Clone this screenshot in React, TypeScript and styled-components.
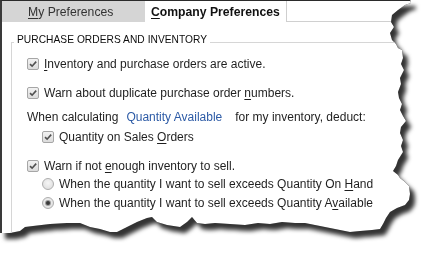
import React from 'react';
import styled, { createGlobalStyle } from 'styled-components';

const GlobalStyle = createGlobalStyle`
  html, body {
    margin: 0;
    padding: 0;
    background: #ffffff;
  }
`;

// torn paper edge, in px of the sheet box
const TORN_EDGE = `polygon(
  0px 0px, 410px 0px, 411px 3px, 405px 5px, 398px 10px, 392px 15px, 391px 22px, 394px 27px,
  390px 33px, 392px 40px, 396px 44px, 398px 48px, 402px 50px, 403px 58px, 401px 64px,
  404px 70px, 400px 78px, 401px 84px, 398px 92px, 399px 98px, 402px 104px, 400px 110px,
  403px 116px, 406px 121px, 401px 127px, 400px 133px, 403px 140px, 401px 146px, 403px 152px,
  398px 160px, 396px 166px, 393px 171px, 398px 175px, 400px 178px, 405px 182px, 409px 186px,
  410px 194px, 409px 200px, 405px 205px, 397px 208px, 390px 212px, 386px 218px, 383px 224px,
  380px 229px, 372px 230px, 360px 231px, 350px 232px, 340px 230px, 330px 228px, 320px 226px,
  305px 223px, 295px 223px, 282px 222px, 270px 224px, 258px 223px, 245px 225px, 230px 224px,
  215px 223px, 205px 224px, 197px 223px, 192px 217px, 187px 222px, 180px 227px, 167px 225px,
  157px 222px, 152px 217px, 147px 218px, 137px 222px, 127px 227px, 117px 232px, 110px 232px,
  100px 229px, 90px 227px, 80px 223px, 67px 223px, 50px 224px, 33px 226px, 25px 227px,
  20px 231px, 10px 233px, 0px 233px
)`;

const Stage = styled.div`
  width: 435px;
  height: 259px;
  overflow: hidden;
  background: #ffffff;
`;

const ShadowWrap = styled.div`
  width: 420px;
  filter: drop-shadow(0 0 0.6px rgba(0, 0, 0, 0.95)) drop-shadow(5px 6px 2px rgba(0, 0, 0, 0.8));
`;

const Sheet = styled.div`
  box-sizing: border-box;
  width: 420px;
  height: 240px;
  background: #ffffff;
  border-top: 1px solid #2b2b2b;
  border-left: 2px solid #3a3a3a;
  clip-path: ${TORN_EDGE};
  font-family: 'Liberation Sans', Arial, sans-serif;
  font-size: 12px;
  color: #1f1f1f;
`;

const Tabs = styled.div`
  display: flex;
  height: 21px;
`;

const Tab = styled.div<{ $width: number; $pad: number; $active?: boolean }>`
  box-sizing: border-box;
  width: ${(p) => p.$width}px;
  padding-left: ${(p) => p.$pad}px;
  display: flex;
  align-items: center;
  font-size: 12.2px;
  background: ${(p) => (p.$active ? '#ffffff' : '#d5d5d5')};
  color: ${(p) => (p.$active ? '#111111' : '#333333')};
  font-weight: ${(p) => (p.$active ? 700 : 400)};
  border-right: ${(p) => (p.$active ? '1px solid #cfcfcf' : 'none')};
`;

const TabFiller = styled.div`
  flex: 1;
  border-bottom: 1px solid #d0d0d0;
`;

const Body = styled.div`
  padding: 13px 0 0 9px;
`;

const Group = styled.fieldset`
  margin: 0;
  padding: 0 0 40px 15px;
  border: none;
  border-top: 1px solid #d6d6d6;
  border-left: 1px solid #d6d6d6;
  min-width: 0;
`;

const GroupTitle = styled.legend`
  margin-left: -13px;
  padding: 0 3px 4px;
  font-size: 10.2px;
  line-height: 10px;
  letter-spacing: 0.05px;
  color: #0c0c0c;
`;

const Row = styled.div<{ $indent?: boolean; $gap: number }>`
  display: flex;
  align-items: center;
  height: 18px;
  margin-top: ${(p) => p.$gap}px;
  padding-left: ${(p) => (p.$indent ? 15 : 0)}px;
  white-space: nowrap;
`;

const Box = styled.span`
  box-sizing: border-box;
  width: 12px;
  height: 12px;
  margin-right: 5px;
  border: 1px solid #a6a6a6;
  border-radius: 2px;
  background: linear-gradient(#f2f2f2, #dcdcdc);
  display: flex;
  align-items: center;
  justify-content: center;
`;

const Radio = styled.span<{ $on?: boolean }>`
  box-sizing: border-box;
  width: 12px;
  height: 12px;
  margin-right: 5px;
  border: 1px solid #adadad;
  border-radius: 50%;
  background: radial-gradient(circle at 50% 40%, #f6f6f6, #d9d9d9);
  display: flex;
  align-items: center;
  justify-content: center;

  &::after {
    content: '';
    display: ${(p) => (p.$on ? 'block' : 'none')};
    width: 4px;
    height: 4px;
    border-radius: 50%;
    background: #3a3a3a;
    box-shadow: 0 0 0 1px #9c9c9c;
  }
`;

const Key = styled.u`
  text-decoration-thickness: 1px;
  text-underline-offset: 2px;
`;

const Prompt = styled.span`
  margin-right: 8px;
`;

const Deduct = styled.span`
  color: #2d5ba6;
  margin-right: 13px;
`;

const Check = () => (
  <Box>
    <svg width="10" height="10" viewBox="0 0 10 10">
      <path d="M2 5.2 L4.1 7.2 L8.2 2.6" fill="none" stroke="#505050" strokeWidth="1.6" />
    </svg>
  </Box>
);

const App: React.FC = () => (
  <>
    <GlobalStyle />
    <Stage>
      <ShadowWrap>
        <Sheet>
          <Tabs>
            <Tab $width={143} $pad={26}>
              <span><Key>M</Key>y Preferences</span>
            </Tab>
            <Tab $width={142} $pad={6} $active>
              <span><Key>C</Key>ompany Preferences</span>
            </Tab>
            <TabFiller />
          </Tabs>
          <Body>
            <Group>
              <GroupTitle>PURCHASE ORDERS AND INVENTORY</GroupTitle>
              <Row $gap={6}>
                <Check />
                <span><Key>I</Key>nventory and purchase orders are active.</span>
              </Row>
              <Row $gap={11}>
                <Check />
                <span>Warn about duplicate purchase order <Key>n</Key>umbers.</span>
              </Row>
              <Row $gap={6}>
                <Prompt>When calculating</Prompt>
                <Deduct>Quantity Available</Deduct>
                <span>for my inventory, deduct:</span>
              </Row>
              <Row $gap={2} $indent>
                <Check />
                <span>Quantity on Sales <Key>O</Key>rders</span>
              </Row>
              <Row $gap={11}>
                <Check />
                <span>Warn if not <Key>e</Key>nough inventory to sell.</span>
              </Row>
              <Row $gap={0} $indent>
                <Radio />
                <span>When the quantity I want to sell exceeds Quantity On <Key>H</Key>and</span>
              </Row>
              <Row $gap={1} $indent>
                <Radio $on />
                <span>When the quantity I want to sell exceeds Quantity A<Key>v</Key>ailable</span>
              </Row>
            </Group>
          </Body>
        </Sheet>
      </ShadowWrap>
    </Stage>
  </>
);

export default App;
